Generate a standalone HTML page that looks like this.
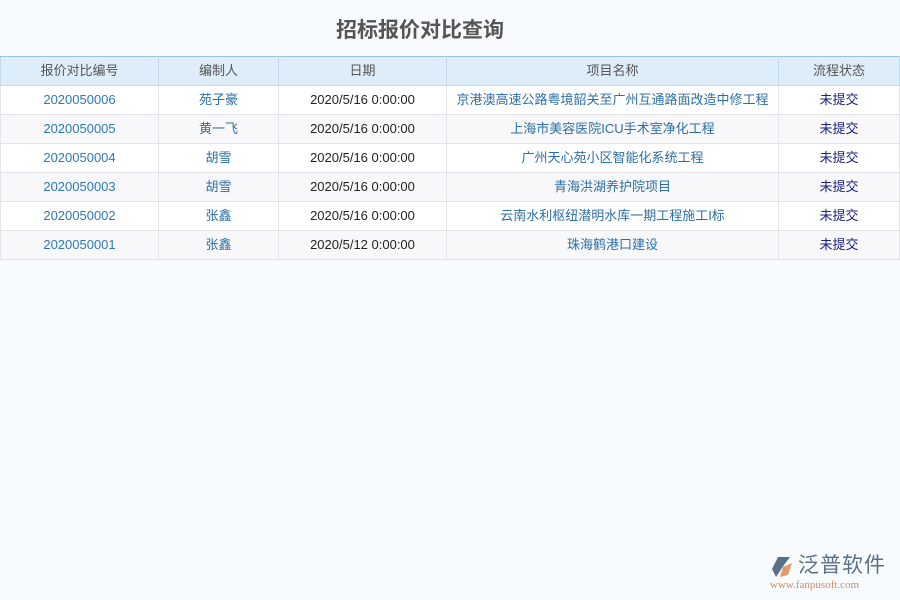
<!DOCTYPE html>
<html><head><meta charset="utf-8"><style>
body{margin:0;width:900px;height:600px;background:#f8fbfd;font-family:"Liberation Sans","Noto Sans CJK SC",sans-serif;position:relative;overflow:hidden}
h1{position:absolute;top:16px;left:0;width:840px;text-align:center;margin:0;font-size:21px;color:#555;font-weight:bold;line-height:30px}
table{position:absolute;top:56px;left:0;width:899px;border-collapse:collapse;font-size:13px;table-layout:fixed}
tr{height:29px}
th{padding:0;line-height:16px;background:#ddeefa;color:#555;font-weight:normal;border:1px solid #c2d9ea;border-top:1px solid #9cc2dc}
td{line-height:16px;text-align:center;border:1px solid #e2e4e8;padding:0;white-space:nowrap}
tr:nth-child(odd) td{background:#fff}
tr:nth-child(even) td{background:#f8f8fa}
td.a{color:#2c7ab6}td.b{color:#2c6fa6}td.c{color:#222}td.d{color:#2c6fa6}td.e{color:#1c2080}
</style></head><body>
<h1>招标报价对比查询</h1>
<table>
<colgroup><col style="width:158px"><col style="width:120px"><col style="width:168px"><col style="width:332px"><col style="width:121px"></colgroup>
<thead><tr><th>报价对比编号</th><th>编制人</th><th>日期</th><th>项目名称</th><th>流程状态</th></tr></thead>
<tbody>
<tr><td class="a">2020050006</td><td class="b">苑子豪</td><td class="c">2020/5/16 0:00:00</td><td class="d">京港澳高速公路粤境韶关至广州互通路面改造中修工程</td><td class="e">未提交</td></tr>
<tr><td class="a">2020050005</td><td class="b">黄一飞</td><td class="c">2020/5/16 0:00:00</td><td class="d">上海市美容医院ICU手术室净化工程</td><td class="e">未提交</td></tr>
<tr><td class="a">2020050004</td><td class="b">胡雪</td><td class="c">2020/5/16 0:00:00</td><td class="d">广州天心苑小区智能化系统工程</td><td class="e">未提交</td></tr>
<tr><td class="a">2020050003</td><td class="b">胡雪</td><td class="c">2020/5/16 0:00:00</td><td class="d">青海洪湖养护院项目</td><td class="e">未提交</td></tr>
<tr><td class="a">2020050002</td><td class="b">张鑫</td><td class="c">2020/5/16 0:00:00</td><td class="d">云南水利枢纽潜明水库一期工程施工I标</td><td class="e">未提交</td></tr>
<tr><td class="a">2020050001</td><td class="b">张鑫</td><td class="c">2020/5/12 0:00:00</td><td class="d">珠海鹤港口建设</td><td class="e">未提交</td></tr>
</tbody></table>
<div style="position:absolute;left:768px;top:554px;width:130px;height:40px">
<svg width="26" height="24" style="position:absolute;left:2px;top:1px" viewBox="0 0 26 24"><path d="M8 2 L20 2 L14 10 L6 22 L2 14 Z" fill="#5b6f86"/><path d="M13 12 L22 8 L18 20 L10 22 Z" fill="#e29a6a"/></svg>
<div style="position:absolute;left:30px;top:-1px;font-size:21px;color:#5b6f86;letter-spacing:1px;line-height:26px">泛普软件</div>
<div style="position:absolute;left:2px;top:25px;font-family:'Liberation Serif',serif;font-size:11px;color:#d08a60;line-height:12px">www.fanpusoft.com</div>
</div>
</body></html>
